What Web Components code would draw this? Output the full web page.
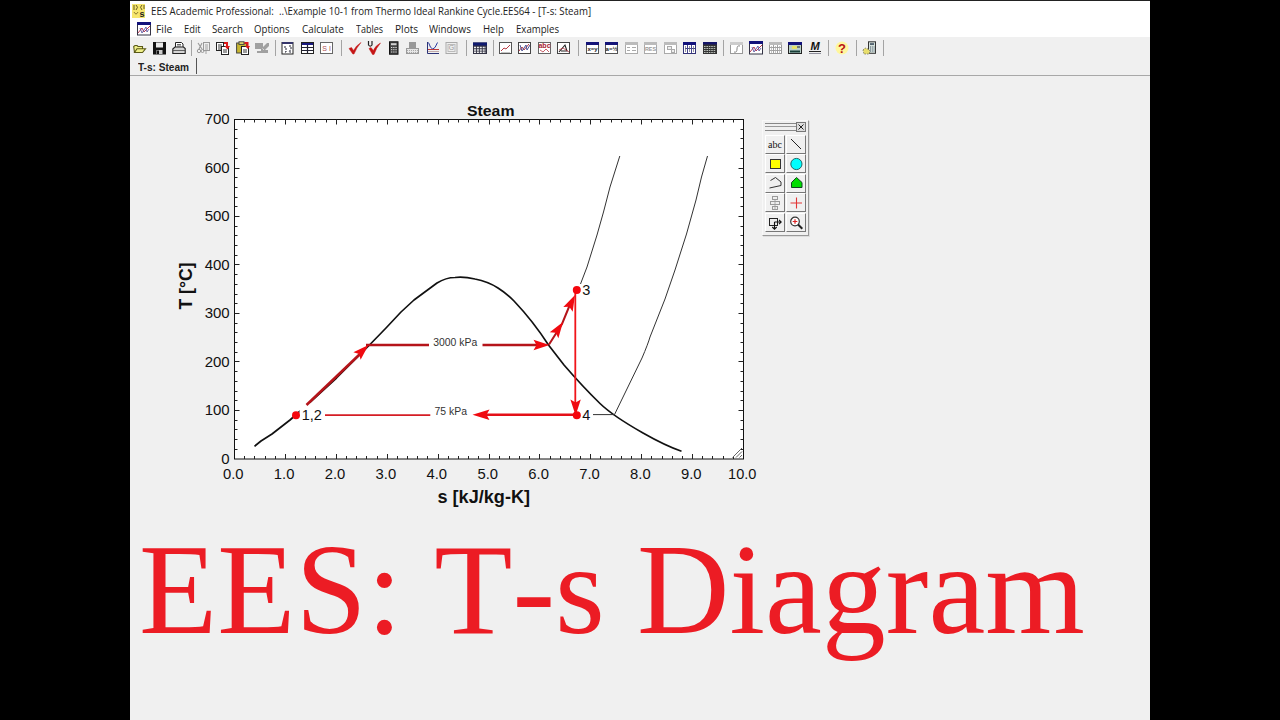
<!DOCTYPE html>
<html lang="en">
<head>
<meta charset="utf-8">
<title>EES: T-s Diagram</title>
<style>
html,body{margin:0;height:100%;background:#000;overflow:hidden}
</style>
</head>
<body>
<ees-app></ees-app>
<script>
const svg = (body, w = 14, h = 14) =>
  `<svg xmlns="http://www.w3.org/2000/svg" width="${w}" height="${h}" viewBox="0 0 ${w} ${h}">${body}</svg>`;
const rect = (x, y, w, h, f, s) =>
  `<rect x="${x}" y="${y}" width="${w}" height="${h}" fill="${f}"${s ? ` stroke="${s}"` : ''}/>`;
const line = (d, c = '#222', w = 1, f = 'none') =>
  `<path d="${d}" fill="${f}" stroke="${c}" stroke-width="${w}"/>`;
const text = (x, y, s, t, c = '#222', extra = '') =>
  `<text x="${x}" y="${y}" font-size="${s}" fill="${c}" text-anchor="middle" ${extra}>${t}</text>`;
const box = c => rect(.5, 1.5, 12, 11, '#fff', c);
const win = (bar, c) => box(c) + rect(0, 1, 13, 3, bar);
const grid = c => line('M1 6.5H12M1 9.5H12M4.5 4V12M8.5 4V12', c, .9);

const ICONS = {
  open: line('M1.5 11.5L.7 5.5L2 4.5H4L5 5.5H9.5V7.5M1.5 11.5L4 7.8H12.5L9.5 11.5Z', '#5a5a18', 1.1, '#f0f08a'),
  save: rect(.5, 1.5, 12, 11.5, '#111', '#111') + rect(3, 1.5, 7, 5, '#e8e8e8') + rect(3.5, 9, 6, 4, '#ccc') + rect(4, 9.5, 2, 3.5, '#111'),
  print: line('M3.5 6V1.5H9.5L11 3V6', '#222', 1, '#fff') + line('M.8 8L3 6H11.5L13.2 7.5V12.5H.8Z', '#222', 1.1, '#d5d5d5') + line('M1 9.5H13M5 3.5H9M5 5H9', '#444', .8),
  cut: line('M1 2L5 8M5 2L2 8', '#999', 1.1) + '<circle cx="2" cy="10" r="1.7" fill="none" stroke="#999"/><circle cx="5.5" cy="10" r="1.5" fill="none" stroke="#999"/>' + rect(6.5, 1.5, 6, 8, '#eee', '#999') + line('M8 4H11M8 6H11M8 8H11M9 10V13', '#999', .9),
  copy: rect(.5, 1.5, 7, 8, '#fff', '#222') + line('M2 4H6M2 6H6M2 8H5', '#222', .9) + rect(5.5, 5.5, 7, 8, '#fff', '#222') + line('M7 9H11M7 11H11', '#222', .9) + '<path d="M8 1H12V5H14L11.5 8.5L8.5 5H10V3H8Z" fill="#dc1818"/>',
  paste: rect(.6, 2, 10, 10, '#c8b630', '#444') + rect(3, .8, 5, 2.6, '#eee470', '#444') + rect(5.5, 5.5, 7, 8, '#fff', '#222') + line('M7 9H11M7 11H11', '#222', .9) + '<path d="M8.5 1H12.5V5H14L12 8L9 5H10.5V3H8.5Z" fill="#dc1818"/>',
  brush: '<path d="M0 2H8V6L12 2H14V5L10 9H13V12H2V10H6V8H0Z" fill="#a0a0a0"/>' + line('M7.5 7.5L9 9', '#ddd', 1),
  vars: rect(1, 1.5, 11, 11.5, '#fff', '#222') + rect(1, 1, 11, 2, '#35356a') + line('M3 6H5V11H3M8 5H10V8L8 11H10', '#223', 1, 'none').replace('<path', '<path stroke-dasharray="2 1"'),
  formatted: rect(.5, 1.5, 12, 11, '#fff', '#222') + rect(1, 2, 11, 2, '#1a1a80') + line('M1 6.5H12M1 9.5H12M6.5 4V12', '#223', 1.2),
  si: rect(.5, 1.5, 12, 11, '#fff', '#666') + text(6.6, 9.5, 7, 'S I', '#b05050'),
  check: '<path d="M1 7.5L3.5 6.5L5.5 9.5Q8 4.5 13 1.5Q8.5 6.5 6 13H4.8Z" fill="#c51616" stroke="#c51616" stroke-width=".5"/>',
  ucheck: '<path d="M2 7.5L4 6.5L6.3 9.5Q8.5 4.5 13.5 2Q9 7 7 13.5H5.5Z" fill="#c51616" stroke="#c51616" stroke-width=".5"/>' + line('M1.5 0V4Q3.2 6.3 5 4V0', '#222', 1.2),
  calc: rect(2.5, .8, 8.5, 12.4, '#444', '#111') + rect(4, 2.2, 5.5, 2, '#d2d2d2') + line('M4 6.5H10M4 8.7H10M4 11H10', '#ddd', 1).replace('<path', '<path stroke-dasharray="1.3 .9"'),
  table: rect(3, 1, 7, 6, '#999') + rect(.5, 7.5, 12, 5, '#e6e6e6', '#999') + line('M1 9.5H12M1 11.5H12', '#999', .8).replace('<path', '<path stroke-dasharray="1 1"'),
  minmax: line('M1.5 1V12.5H13', '#2b3377', 1) + line('M2.5 1.5Q6.5 14.5 11.5 1.5', '#2a3ca0', 1) + line('M2 8.5H13', '#c23838', 1) + line('M2 10.5H13', '#a88', .7),
  integral: rect(1, 1.5, 11, 11, '#eee', '#aaa') + rect(3, 3.5, 7, 7, '#eee', '#bbb') + text(6.5, 9.3, 7, 'G', '#999'),
  tbl: rect(0, 1.5, 14, 11.5, '#334') + rect(0, 1.5, 14, 3, '#101a70') + line('M1 6.5H13M1 9H13M1 11.3H13', '#eee', 1.5).replace('<path', '<path stroke-dasharray="2 .9"'),
  plot1: box('#555') + line('M2 10L5 7L7 8L11 4', '#b83a45') + line('M2 11.5H11', '#aaa', .7),
  plot2: box('#444') + line('M1 10L4 6L6 9L11 3', '#b83a45') + line('M2 4L4 10L8 4L9 9L12 4', '#3c448f', .9),
  plot3: box('#666') + text(6.5, 7, 7, 'abc', '#a92330', 'font-weight="bold"') + line('M2 9L5 11L8 8L11 11', '#b83a45', .8),
  plot4: box('#444') + line('M2 11L8 4L10 10H4', '#222', 1.1) + line('M2 9L6 7L12 11', '#b83a45', .8),
  xy: win('#141478', '#555') + text(6.5, 10, 6, 'x=y', '#222', 'font-weight="bold"'),
  eq: win('#141478', '#555') + text(6.5, 10, 6, 'a=½', '#222', 'font-weight="bold"'),
  g1: win('#bbb', '#aaa') + line('M2 6.5H5M7 6.5H11M2 9.5H5M7 9.5H11', '#aaa', 1),
  res: win('#bbb', '#aaa') + text(6.5, 10, 5.4, 'RES', '#999', 'font-weight="bold"'),
  g2: win('#bbb', '#aaa') + rect(3.5, 5.5, 4, 3, '#eee', '#aaa') + rect(7.5, 8.5, 3, 3, '#eee', '#aaa'),
  arr: win('#10107a', '#333378') + line('M4.5 4V12M8.5 4V12M2 7.5H12', '#44448c', 1) + line('M2.5 5V11M6.5 5V11M10.5 5V11', '#667', .7),
  look: rect(0, 1, 14, 12, '#333') + rect(0, 1, 14, 2.5, '#151568') + line('M1 5.5H13M1 7.5H13M1 9.5H13M1 11.5H13', '#b8bdb8', 1).replace('<path', '<path stroke-dasharray="1.6 .8"'),
  func: win('#ccc', '#999') + line('M4 11Q7 12 7 8T10 5', '#888', 1),
  plotwin: rect(.5, .5, 13, 12.5, '#fff', '#334') + rect(0, 0, 14, 3, '#12127a') + line('M1 11L5 6L7 10L13 4', '#b83a55') + line('M3 6L5 11L9 5L10 10L12 7', '#4a4898', .8),
  g3: win('#bbb', '#999') + grid('#999') + line('M2.5 5V12M6.5 5V12M10.5 5V12', '#aaa', .7),
  diag: rect(.5, 1.5, 13, 11, '#b9cfc9', '#222') + rect(0, 1, 14, 3, '#12127a') + rect(4, 5, 5, 3, '#e5e26a') + line('M2 10.5H12', '#163d36', 2) + line('M9 6H12', '#222', 1),
  mac: text(7, 9, 11, 'M', '#111', 'font-family="Liberation Sans" font-style="italic" font-weight="bold"') + line('M1 10.5H13', '#222', 1) + line('M1 12.5H13', '#778', .8),
  help: '<circle cx="7" cy="7" r="6.5" fill="#fff79c"/>' + text(7, 11.7, 13, '?', '#b81414', 'font-weight="bold"'),
  exit: rect(5.5, .8, 7, 11.5, '#d6e2dd', '#333') + rect(7, 2.3, 4, 1.5, '#345') + line('M7 6H11.5M7 8H11.5M7 10H11.5', '#456', 1).replace('<path', '<path stroke-dasharray="1 .8"') + '<path d="M0 9L2 7L5 8L7 10L6 13H1Z" fill="#e8de6c" stroke="#665" stroke-width=".7" stroke-dasharray="1.5 1"/>',
  app: rect(0, 0, 13, 14, '#f6e66d') + line('M2 1V6M4 1Q7 3 4 6M10 1Q7 3 10 6M12 1V5', '#665a20', 1) + text(10, 13, 9, 's', '#222', 'font-weight="bold"') + line('M2 8Q4 12 6 8', '#8a7a30', 1),
  // drawing palette
  pLine: line('M2 2L12 12', '#222', 1),
  pRect: rect(2.5, 2.5, 10, 9, '#ff0', '#333'),
  pCirc: '<circle cx="7.4" cy="7" r="5.6" fill="#0ff" stroke="#266"/>',
  pPoly: line('M2.5 4.5L7.5 1.5L13 6V9.5L1.5 12', '#333', 1),
  pHouse: '<path d="M2.5 6.5L7.5 1.5L13 6.5V11.5H2.5Z" fill="#0d0" stroke="#142"/>',
  pAlign: rect(4.5, .5, 5, 3, '#eee', '#999') + rect(2.5, 5.5, 9, 3, '#eee', '#999') + rect(4.5, 10.5, 5, 3, '#eee', '#999') + line('M7 3V13', '#999', .8),
  pCross: line('M7.5 1.5V12.5M1.5 7H13', '#e23434', 1.1),
  pMove: rect(1.5, 2.5, 8, 7, '#eee', '#222') + line('M6.5 6H13M11 3.8L13.2 6L11 8.2M6.5 6V13M4.3 11L6.5 13.2L8.7 11', '#111', 1.1),
  pZoom: '<circle cx="6" cy="5.5" r="4.3" fill="#fff" stroke="#333" stroke-width="1.2"/>' + line('M9 8.5L13.3 12.8', '#222', 2) + line('M3.7 5.5H8.3M6 3.2V7.8', '#d22', 1.2)
};

const define = (name, render) => customElements.define(name, class extends HTMLElement {
  connectedCallback() {
    if (this.shadowRoot) return;
    this.attachShadow({ mode: 'open' }).innerHTML = render(this);
  }
});

define('ees-icon', el => `<style>
  :host{display:flex;align-items:center;justify-content:center;flex:none;width:19.5px;height:18px;font-family:"Liberation Sans",Arial,sans-serif}
  svg{display:block;overflow:visible}</style>${svg(ICONS[el.getAttribute('name')])}`);

define('tool-separator', el => `<style>
  :host{display:flex;justify-content:center;flex:none;width:${el.getAttribute('w')}px;height:16px}
  i{width:1px;background:#a4a4a4}</style><i></i>`);

/* A single line of text condensed or widened to an exact advance width. */
customElements.define('fit-text', class extends HTMLElement {
  connectedCallback() {
    const w = +this.getAttribute('w');
    this.attachShadow({ mode: 'open' }).innerHTML = `<style>
      :host{display:block;flex:none;width:${w}px;white-space:pre}
      span{display:inline-block;transform-origin:0 50%}</style><span><slot></slot></span>`;
    const s = this.shadowRoot.querySelector('span');
    s.style.transform = `scaleX(${w / s.offsetWidth})`;
  }
});

define('title-bar', () => `<style>
  :host{display:flex;align-items:center;height:20px;gap:6px;padding-left:2px;font:10.6px "Open Sans","Noto Sans",sans-serif;color:#222;background:#fff}
  ees-icon{width:13px}</style>
  <ees-icon name="app"></ees-icon><fit-text w="440">EES Academic Professional:  ..\\Example 10-1 from Thermo Ideal Rankine Cycle.EES64 - [T-s: Steam]</fit-text>`);

define('menu-bar', () => {
  const items = [['File', 16, 12], ['Edit', 17, 11], ['Search', 31, 11], ['Options', 36, 12], ['Calculate', 42, 12], ['Tables', 27, 11.5], ['Plots', 23, 11.5], ['Windows', 42, 11.5], ['Help', 21, 12], ['Examples', 43, 0]];
  return `<style>
  :host{display:flex;align-items:center;height:16px;padding-left:6.5px;background:#fff;color:#222;font:11px/16px "Open Sans","Noto Sans",sans-serif}
  ees-icon{width:14px;margin-right:5.5px}</style><ees-icon name="plotwin"></ees-icon>` +
  items.map(([t, w, g]) => `<fit-text w="${w}" style="margin-right:${g}px">${t}</fit-text>`).join('');
});

define('tool-bar', () => {
  const list = 'open save print |5 cut copy paste brush |6.5 vars formatted si |8 check ucheck calc table minmax integral |8.5 tbl |6 plot1 plot2 plot3 plot4 |9 xy eq g1 res g2 arr look |7.5 func plotwin g3 diag mac |8 help |8.5 exit |7'.split(' ');
  return `<style>:host{display:flex;align-items:center;height:21px;padding-left:.5px;background:#f0f0f0}</style>` +
  list.map(n => n[0] === '|' ? `<tool-separator w="${n.slice(1)}"></tool-separator>` : `<ees-icon name="${n}"></ees-icon>`).join('');
});

define('tab-strip', () => `<style>
  :host{display:flex;height:17px;border-bottom:1px solid #a8a8a8;background:#f0f0f0;font:bold 10px/17px "Liberation Sans",Arial,sans-serif;color:#222}
  div{padding:1px 6.5px 0 7.5px;border-right:1px solid #555;height:15px;line-height:17px}</style><div><fit-text w="51.5">T-s: Steam</fit-text></div>`);

define('draw-palette', () => `<style>
  :host{display:block;box-sizing:border-box;width:47px;height:116px;padding:1px 2px 2px;background:#f0f0f0;border:1px solid;border-color:#f8f8f8 #999 #999 #f8f8f8;box-shadow:1px 1px 0 #ddd}
  header{display:flex;height:10px;margin-bottom:2.7px;align-items:center}
  .grip{flex:1;height:6px;border:solid #888;border-width:1px 0;background:linear-gradient(#f0f0f0 2px,#999 2px,#999 3px,#f0f0f0 3px)}
  .close{width:8px;height:8px;border:1px solid #777;background:#ddd;display:flex}
  .tools{display:grid;grid-template-columns:20px 20px;column-gap:1px;grid-auto-rows:19.6px}
  .tools>*{box-sizing:border-box;width:20px;height:19px;background:#f0f0f0;border:1px solid;border-color:#fff #777 #777 #fff}
  b{font:10px/17px "Liberation Serif",serif;text-align:center;color:#111}</style>
  <header><div class="grip"></div><div class="close">${svg(line('M1.5 1.5L6.5 6.5M6.5 1.5L1.5 6.5', '#222', 1), 8, 8)}</div></header>
  <div class="tools"><b>abc</b>${['pLine', 'pRect', 'pCirc', 'pPoly', 'pHouse', 'pAlign', 'pCross', 'pMove', 'pZoom'].map(n => `<ees-icon name="${n}"></ees-icon>`).join('')}</div>`);

define('ts-chart', () => {
  const X = v => 234.5 + v * 50.9, Y = v => 458.9 - v * .4848;
  let ticks = '', labels = '';
  for (let i = 1; i < 50; i++) {
    const x = Math.round(X(i / 5) - .5) + .5, l = i % 5 ? 3 : 5;
    ticks += `M${x} 119.5v${l}M${x} 459v-${l}`;
  }
  for (let i = 1; i < 35; i++) {
    const y = Math.round(Y(i * 20) - .5) + .5, l = i % 5 ? 3 : 5;
    ticks += `M234.5 ${y}h${l}M743.5 ${y}h-${l}`;
  }
  const fit = (s, w) => `textLength="${w}" lengthAdjust="spacingAndGlyphs">${s}</text>`;
  for (let i = 0; i <= 10; i++) { const w = i === 10 ? 28.3 : 20.6; labels += `<text x="${X(i) - 1.3 - w / 2}" y="479" ` + fit(i + '.0', w); }
  for (let i = 0; i <= 7; i++) labels += `<text x="229.7" y="${Y(i * 100) + 4.6}" text-anchor="end">${i * 100}</text>`;
  const head = (x, y, a, l = 16) => `<path transform="translate(${x} ${y}) rotate(${a})" d="M0 0L-${l} -5.2L-${l - 3} 0L-${l} 5.2Z" fill="#f00a10"/>`;
  return `<style>:host{display:block;width:600px;height:410px;font:15px "Liberation Sans",Arial,sans-serif;color:#111}svg{display:block}</style>
  <svg width="600" height="410" viewBox="170 100 600 410" fill="#111">
  <rect x="234.5" y="119.5" width="509" height="339.5" fill="#fff" stroke="#111"/>
  <path d="${ticks}" stroke="#222" fill="none"/>${labels}
  <text x="467" y="116.3" font-size="15.5" font-weight="bold" ${fit('Steam', 47.5)}
  <text x="437.5" y="503.2" font-size="18" font-weight="bold" ${fit('s [kJ/kg-K]', 92.5)}
  <text transform="translate(192.3 309.5) rotate(-90)" font-size="18" font-weight="bold" ${fit('T [°C]', 47)}
  <g fill="none" stroke="#111" stroke-linejoin="round">
    <path stroke-width="1.7" d="M254.5 446.3L261 441L272 434L290 420L307 405L336.5 378L369 345.5L386 328L401 312L414 300L437 283Q446 277.5 455 277.5Q464 276.5 475 279Q488 281.5 498 288Q506 293 514 301Q533 321 548.5 345L564 365Q583 387 600 403.5Q613 416 643 433Q665 445.5 681.5 451.3"/>
    <path stroke-width="1" stroke="#333" d="M580.5 284L587 267L597 235L603.5 212L610 187L619.8 156M593 414.6H614.5L642 358Q648 344 650 337L665 299L675 270L686.5 234L696 200L701.5 177L707.5 156"/>
  </g>
  <path d="M299.5 402L306 402L325 407V424H299.5Z" fill="#fff"/>
  <g fill="none" stroke="#b5141a">
    <path stroke-width="2.6" d="M306.5 405L360 354"/>
    <path stroke-width="2.4" d="M366 345H429M482.5 345H540"/>
    <path stroke-width="1.7" stroke="#d51d24" d="M325 415.2H430.3"/>
    <path stroke-width="2.6" stroke="#e41018" d="M485 414.7H577"/>
    <path stroke-width="2" d="M549 344.5L562 324L571 302"/>
    <path stroke-width="1.8" stroke="#f0141a" d="M575.3 292V407"/>
  </g>
  ${head(368.5, 345, -44)}${head(549.5, 345, 0)}${head(563, 322, -56)}${head(575, 295, -64)}${head(575.6, 415.5, 90)}${head(472.5, 414.7, 180, 17)}
  <g fill="#f4060d"><circle cx="296" cy="415.2" r="4"/><circle cx="576.8" cy="290" r="4"/><circle cx="576.8" cy="415.2" r="4"/></g>
  <g font-size="14.5"><text x="301.7" y="420.3">1,2</text><text x="582.3" y="295">3</text><text x="582.3" y="420">4</text></g>
  <g font-size="10.3" fill="#333"><text x="433.2" y="345.5" ${fit('3000 kPa', 44)}<text x="434.5" y="415" ${fit('75 kPa', 32.5)}</g>
  <path d="M732.5 457.5L742 448M736 457.5L742 451.5M739.5 457.5L742 455" stroke="#666" fill="none"/>
  </svg>`;
});

define('plot-window', () => `<style>
  :host{display:flex;flex-direction:column;flex:1;background:#f0f0f0}
  .row{display:flex;align-items:flex-start;padding:24px 0 0 40px;height:410px}
  draw-palette{margin:20px 0 0 -8px}
  h1{margin:0;padding:6px 0 0 8.5px;font:129px/148px "Liberation Serif","Times New Roman",serif;font-kerning:none;color:#ec1c24}</style>
  <div class="row"><ts-chart></ts-chart><draw-palette></draw-palette></div><h1><fit-text w="946">EES: T-s Diagram</fit-text></h1>`);

define('ees-app', () => `<style>
  :host{display:flex;justify-content:center;width:1280px;height:720px;background:#000}
  main{display:flex;flex-direction:column;width:1020px;box-sizing:border-box;border-top:1.5px solid #222;overflow:hidden}</style>
  <main><title-bar></title-bar><menu-bar></menu-bar><tool-bar></tool-bar><tab-strip></tab-strip><plot-window></plot-window></main>`);
</script>
</body>
</html>
